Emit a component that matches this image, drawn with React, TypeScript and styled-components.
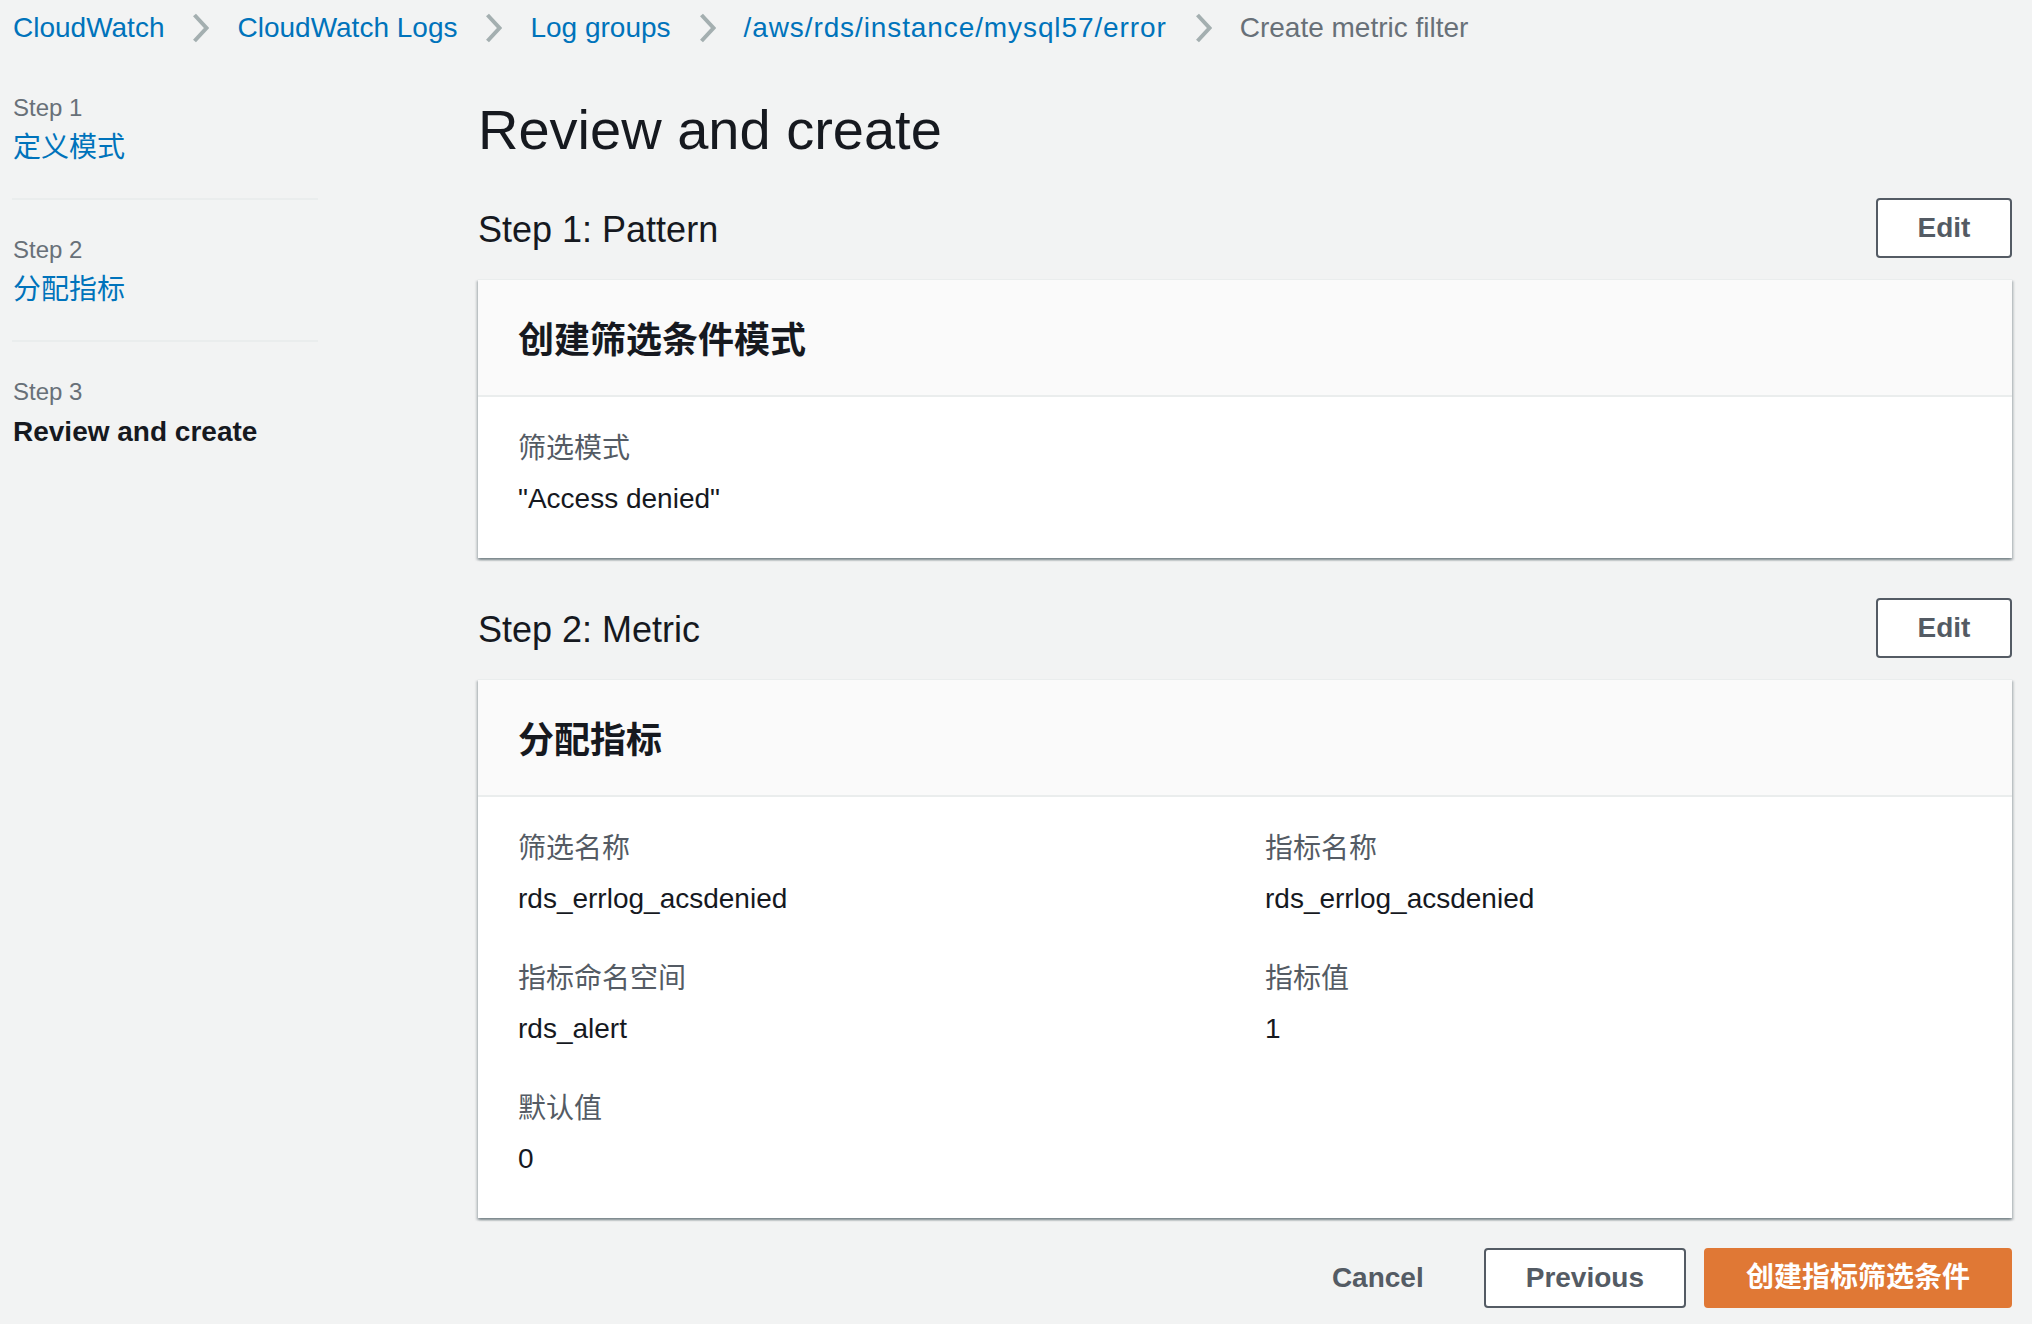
import React from 'react';
import styled, { createGlobalStyle } from 'styled-components';

const GlobalStyle = createGlobalStyle`
  html, body {
    margin: 0;
    padding: 0;
    background: #f2f3f3;
  }
  body {
    font-family: "Liberation Sans", Arial, "Noto Sans CJK SC", sans-serif;
    color: #16191f;
    -webkit-font-smoothing: antialiased;
  }
`;

const Page = styled.div`
  min-height: 1324px;
  padding: 8px 20px 0 12px;
  box-sizing: border-box;
`;

const Breadcrumbs = styled.nav`
  display: flex;
  align-items: center;
  height: 40px;
  font-size: 28px;
  line-height: 40px;
  padding-left: 1px;
`;

const Crumb = styled.a<{ $current?: boolean; $path?: boolean }>`
  color: ${p => (p.$current ? '#687078' : '#0073bb')};
  text-decoration: none;
  white-space: nowrap;
  letter-spacing: ${p => (p.$path ? '0.9px' : '0')};
`;

const Chevron = styled.svg`
  width: 17px;
  height: 30px;
  margin: 0 28px;
  flex-shrink: 0;
`;

const Layout = styled.div`
  display: grid;
  grid-template-columns: 306px 1fr;
  column-gap: 160px;
`;

const SideNav = styled.ul`
  list-style: none;
  margin: 0;
  padding: 44px 0 0;
`;

const NavItem = styled.li<{ $last?: boolean }>`
  padding: 34px 0 30px 1px;
  border-bottom: ${p => (p.$last ? 'none' : '2px solid #eaeded')};

  &:first-child {
    padding-top: 0;
  }
`;

const StepLabel = styled.div`
  font-size: 24px;
  line-height: 32px;
  color: #687078;
`;

const StepTitle = styled.div<{ $active?: boolean }>`
  margin-top: 4px;
  font-size: 28px;
  line-height: 40px;
  color: ${p => (p.$active ? '#16191f' : '#0073bb')};
  font-weight: ${p => (p.$active ? 700 : 400)};
`;

const Main = styled.main`
  padding-top: 50px;
  display: flex;
  flex-direction: column;
`;

const PageTitle = styled.h1`
  margin: 0;
  font-size: 56px;
  line-height: 64px;
  font-weight: 400;
  color: #16191f;
`;

const SectionHeader = styled.div<{ $first?: boolean }>`
  display: flex;
  align-items: center;
  justify-content: space-between;
  margin-top: ${p => (p.$first ? '36px' : '40px')};
`;

const SectionTitle = styled.h2`
  margin: 4px 0 0;
  font-size: 36px;
  line-height: 44px;
  font-weight: 400;
  color: #16191f;
`;

const Button = styled.button<{ $variant?: 'normal' | 'primary' | 'link' }>`
  box-sizing: border-box;
  height: 60px;
  padding: 0 40px;
  border-radius: 4px;
  font-family: inherit;
  font-size: 28px;
  line-height: 40px;
  font-weight: 700;
  cursor: pointer;
  border: 2px solid
    ${p => (p.$variant === 'primary' ? '#e07835' : p.$variant === 'link' ? 'transparent' : '#545b64')};
  background: ${p => (p.$variant === 'primary' ? '#e07835' : p.$variant === 'link' ? 'transparent' : '#ffffff')};
  color: ${p => (p.$variant === 'primary' ? '#ffffff' : '#545b64')};
`;

const EditButton = styled(Button)`
  width: 136px;
  padding: 0;
`;

const Card = styled.section`
  margin-top: 21px;
  background: #ffffff;
  box-shadow: 0 2px 2px 0 rgba(0, 28, 36, 0.3), 2px 2px 2px 0 rgba(0, 28, 36, 0.15),
    -2px 2px 2px 0 rgba(0, 28, 36, 0.15);
  border-top: 1px solid #eaeded;
`;

const CardHeader = styled.div`
  background: #fafafa;
  border-bottom: 2px solid #eaeded;
  padding: 39px 40px 32px;
`;

const CardTitle = styled.h3`
  margin: 0;
  font-size: 36px;
  line-height: 44px;
  font-weight: 700;
  color: #16191f;
`;

const CardBody = styled.div<{ $columns?: number }>`
  display: grid;
  grid-template-columns: repeat(${p => p.$columns ?? 1}, 1fr);
  column-gap: 40px;
  row-gap: 40px;
  padding: 32px 40px 39px;
`;

const Field = styled.div`
  display: flex;
  flex-direction: column;
  gap: 10px;
`;

const FieldLabel = styled.div`
  font-size: 28px;
  line-height: 40px;
  color: #545b64;
`;

const FieldValue = styled.div`
  font-size: 28px;
  line-height: 40px;
  color: #16191f;
`;

const Footer = styled.div`
  display: flex;
  justify-content: flex-end;
  align-items: center;
  gap: 18px;
  margin-top: 30px;
`;

const ChevronIcon = () => (
  <Chevron viewBox="0 0 17 30">
    <polyline points="2.5,2 14.5,15 2.5,28" fill="none" stroke="#a4afb0" strokeWidth="4" />
  </Chevron>
);

const crumbs = ['CloudWatch', 'CloudWatch Logs', 'Log groups', '/aws/rds/instance/mysql57/error'];

const steps = [
  { label: 'Step 1', title: '定义模式' },
  { label: 'Step 2', title: '分配指标' },
  { label: 'Step 3', title: 'Review and create', active: true },
];

const metricFields = [
  { label: '筛选名称', value: 'rds_errlog_acsdenied' },
  { label: '指标名称', value: 'rds_errlog_acsdenied' },
  { label: '指标命名空间', value: 'rds_alert' },
  { label: '指标值', value: '1' },
  { label: '默认值', value: '0' },
];

export default function App() {
  return (
    <Page>
      <GlobalStyle />
      <Breadcrumbs>
        {crumbs.map(c => (
          <React.Fragment key={c}>
            <Crumb href="#" $path={c.startsWith('/')}>
              {c}
            </Crumb>
            <ChevronIcon />
          </React.Fragment>
        ))}
        <Crumb $current>Create metric filter</Crumb>
      </Breadcrumbs>

      <Layout>
        <SideNav>
          {steps.map((s, i) => (
            <NavItem key={s.label} $last={i === steps.length - 1}>
              <StepLabel>{s.label}</StepLabel>
              <StepTitle $active={s.active}>{s.title}</StepTitle>
            </NavItem>
          ))}
        </SideNav>

        <Main>
          <PageTitle>Review and create</PageTitle>

          <SectionHeader $first>
            <SectionTitle>Step 1: Pattern</SectionTitle>
            <EditButton>Edit</EditButton>
          </SectionHeader>
          <Card>
            <CardHeader>
              <CardTitle>创建筛选条件模式</CardTitle>
            </CardHeader>
            <CardBody>
              <Field>
                <FieldLabel>筛选模式</FieldLabel>
                <FieldValue>"Access denied"</FieldValue>
              </Field>
            </CardBody>
          </Card>

          <SectionHeader>
            <SectionTitle>Step 2: Metric</SectionTitle>
            <EditButton>Edit</EditButton>
          </SectionHeader>
          <Card>
            <CardHeader>
              <CardTitle>分配指标</CardTitle>
            </CardHeader>
            <CardBody $columns={2}>
              {metricFields.map(f => (
                <Field key={f.label}>
                  <FieldLabel>{f.label}</FieldLabel>
                  <FieldValue>{f.value}</FieldValue>
                </Field>
              ))}
            </CardBody>
          </Card>

          <Footer>
            <Button $variant="link">Cancel</Button>
            <Button>Previous</Button>
            <Button $variant="primary">创建指标筛选条件</Button>
          </Footer>
        </Main>
      </Layout>
    </Page>
  );
}
